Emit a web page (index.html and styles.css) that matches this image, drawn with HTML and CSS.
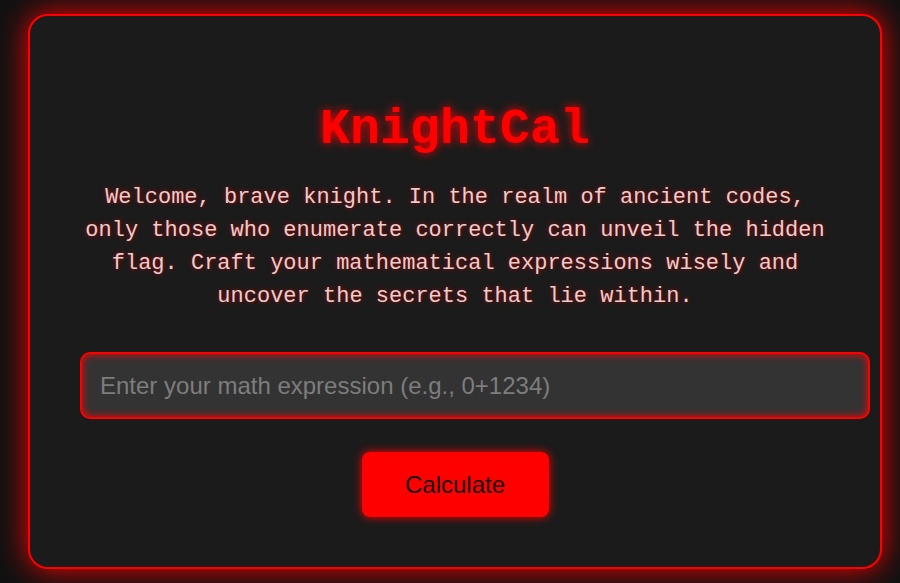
FILE: index.html
```html
<!DOCTYPE html>
<html>
<head>
<meta charset="utf-8">
<title>KnightCal</title>
<link rel="stylesheet" href="styles.css">
</head>
<body>
<div class="container">
  <h1 class="title">KnightCal</h1>
  <p class="intro">Welcome, brave knight. In the realm of ancient codes, only those who enumerate correctly can unveil the hidden flag. Craft your mathematical expressions wisely and uncover the secrets that lie within.</p>
  <input class="expr" type="text" placeholder="Enter your math expression (e.g., 0+1234)">
  <div class="actions">
    <button class="calc">Calculate</button>
  </div>
</div>
</body>
</html>
```
FILE: styles.css
```css
html, body {
  margin: 0;
  background: #111111;
  height: 100%;
  overflow: hidden;
}
body {
  padding: 14px 18px 14px 28px;
  box-sizing: border-box;
}
.container {
  box-sizing: border-box;
  width: 854px;
  height: 555px;
  background: #1b1b1b;
  border: 2px solid #ff0000;
  border-radius: 20px;
  box-shadow: 0 0 30px #ff0000;
  padding: 86px 50px 50px 50px;
  display: flex;
  flex-direction: column;
}
.title {
  margin: 0;
  font-family: "Liberation Mono", "Courier New", monospace;
  font-weight: bold;
  font-size: 50px;
  line-height: 56px;
  color: #ff0000;
  text-align: center;
  text-shadow: 0 0 10px #ff0000;
}
.intro {
  margin: 23px 0 39px 0;
  font-family: "Liberation Mono", "Courier New", monospace;
  font-size: 22px;
  line-height: 33px;
  color: #e6cfcf;
  text-align: center;
  text-shadow: 0 0 4px #b00000;
}
.expr {
  box-sizing: border-box;
  width: 790px;
  height: 68px;
  margin: 0;
  padding: 0 18px;
  background: #333333;
  border: 2px solid #ff0000;
  border-radius: 10px;
  box-shadow: inset 0 0 8px #ff0000;
  font-family: "Liberation Sans", Arial, sans-serif;
  font-size: 24px;
  color: #dddddd;
  outline: none;
}
.expr::placeholder {
  color: #7d7d7d;
}
.actions {
  display: flex;
  justify-content: center;
  margin-top: 33px;
}
.calc {
  width: 187px;
  height: 65px;
  background: #ff0000;
  border: none;
  border-radius: 8px;
  box-shadow: 0 0 10px #ff0000;
  font-family: "Liberation Sans", Arial, sans-serif;
  font-size: 24px;
  color: #111111;
  cursor: pointer;
}
```
